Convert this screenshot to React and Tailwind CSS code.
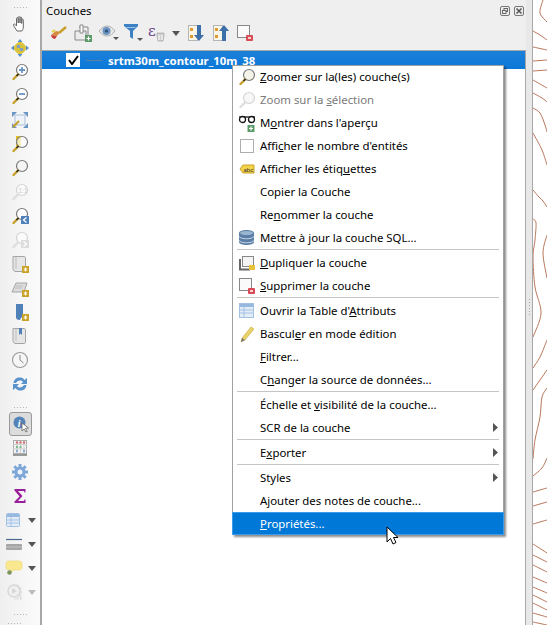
import React from 'react';

const Svg = ({ children, w = 18, h = 18, className = '' }) => (
  <svg width={w} height={h} viewBox={`0 0 ${w} ${h}`} className={`block shrink-0 overflow-visible ${className}`}>{children}</svg>
);

const Arrow = ({ fill = '#555' }) => (
  <svg width="8" height="5" viewBox="0 0 8 5" className="block shrink-0"><path d="M0 0h8L4 5z" fill={fill} /></svg>
);

const Lens = ({ fill = '#f3f3ea', muted = false, handle = true }) => (
  <>
    <circle cx="11" cy="7" r="5.5" fill={fill} stroke={muted ? '#d4d4d4' : '#7a7a7a'} strokeWidth="1.2" />
    {handle && <path d="M7 11.5L2.5 16" stroke={muted ? '#dedede' : '#c79f2b'} strokeWidth="2.4" strokeLinecap="round" />}
    {handle && !muted && <path d="M7.5 11L5.5 13" stroke="#222" strokeWidth="1.4" />}
  </>
);

const Hand = () => (
  <Svg><path d="M6 16c-1-2-3-4-3.500-6-.2-1 1-1.500 1.700-.5L5.500 11V3.500c0-1.200 1.700-1.200 1.700 0V8V2.500c0-1.200 1.800-1.200 1.800 0V8V3c0-1.200 1.700-1.200 1.700 0v5.500V5c0-1.100 1.600-1.100 1.600 0v7c0 2-.7 3-1.300 4z" fill="#fff" stroke="#666" strokeWidth="1" /></Svg>
);
const PanTo = () => (
  <Svg>
    <path d="M5 5l4-3 4 3 3 4-3 4-4 3-4-3-3-4z" fill="#d8c23c" />
    <path d="M9 0l2.500 3h-5zM9 18l-2.500-3h5zM0 9l3-2.500v5zM18 9l-3-2.500v5z" fill="#5b8fc9" />
    <path d="M6 6h3v3H6zM9 9h3v3H9z" fill="#7d9ec7" />
  </Svg>
);
const ZoomIn = () => (<Svg><Lens fill="#fff" /><path d="M8 7h6M11 4v6" stroke="#6a94c4" strokeWidth="1.800" /></Svg>);
const ZoomOut = () => (<Svg><Lens fill="#fff" /><path d="M8 7h6" stroke="#6a94c4" strokeWidth="1.800" /></Svg>);
const ZoomFull = () => (
  <Svg>
    <path d="M1 1h5L1 6zM17 1v5l-5-5zM17 17h-5l5-5zM1 17v-5l5 5z" fill="#6a94c4" />
    <rect x="4" y="4" width="10" height="10" fill="#f0f4f8" stroke="#a9c0da" />
    <path d="M8 10L2 16" stroke="#c79f2b" strokeWidth="2.200" />
  </Svg>
);
const ZoomLayer = () => (<Svg><rect x="5" y="1" width="5" height="10" fill="#e0c020" /><Lens fill="#ffffffb0" /></Svg>);
const ZoomSel = () => (<Svg><Lens fill="#f4f4f4" /></Svg>);
const ZoomNative = () => (
  <Svg><Lens muted fill="#fbfbfb" /><text x="7.500" y="9.500" fontSize="6.500" fill="#c8c8c8" fontFamily="Liberation Sans">1:1</text></Svg>
);
const ZoomLast = () => (
  <Svg><Lens fill="#fff" /><rect x="10" y="9" width="8" height="8" fill="#4f80b8" /><path d="M15.500 10.500L12.500 13l3 2.500" stroke="#fff" strokeWidth="1.300" fill="none" /></Svg>
);
const ZoomNext = () => (
  <Svg><Lens muted fill="#fbfbfb" /><rect x="10" y="9" width="8" height="8" fill="#dcdcdc" /><path d="M12.500 10.500L15.500 13l-3 2.500" stroke="#fff" strokeWidth="1.300" fill="none" /></Svg>
);
const Star = () => (
  <g><rect x="11" y="11" width="7" height="7" fill="#c9a227" /><path d="M14.500 12.500v4M12.800 13.500l3.400 2M16.200 13.500l-3.400 2" stroke="#fff" strokeWidth=".9" /></g>
);
const Scroll = ({ children }) => (
  <Svg>
    <path d="M2 1.500h11c1 0 1.500.5 1.500 1.500v12c0 1-.5 1.500-1.500 1.500H5c-2 0-3-1-3-3z" fill="#e6e6e6" stroke="#a5a5a5" />
    <path d="M5 2v12" stroke="#bdbdbd" />
    {children}
  </Svg>
);
const NewMap = () => (<Scroll><Star /></Scroll>);
const NewComposer = () => (
  <Svg>
    <path d="M5 4h11l-3 9H1z" fill="#dcdcdc" stroke="#a5a5a5" />
    <path d="M5 7h7M4 9h7" stroke="#bdbdbd" />
    <Star />
  </Svg>
);
const NewBookmark = () => (
  <Svg><path d="M5 1h7v13c-2 0-2 1-3 3-3 0-4-1-4-3z" fill="#4f80b8" /><Star /></Svg>
);
const Bookmarks = () => (<Scroll><path d="M8 1h3v7L9.500 6.500 8 8z" fill="#4f80b8" /></Scroll>);
const Clock = () => (
  <Svg><circle cx="9" cy="9" r="7.500" fill="#f6f6f6" stroke="#9a9a9a" strokeWidth="1.100" /><path d="M9 4v5l3.500 3" stroke="#888" strokeWidth="1" fill="none" /></Svg>
);
const Refresh = () => (
  <Svg>
    <path d="M2.500 8C3 4 6 2 9.500 2.500c2 .2 3.300 1.300 4 2.500L16 3v6h-6l2-2C10.500 4.800 6.500 5 5 8z" fill="#5a92cc" />
    <path d="M15.500 10c-.5 4-3.500 6-7 5.500-2-.2-3.300-1.300-4-2.500L2 15V9h6l-2 2c1.500 2.200 5.500 2 7-1z" fill="#5a92cc" />
  </Svg>
);
const Identify = () => (
  <Svg>
    <circle cx="7.500" cy="7.500" r="6" fill="#5583b8" />
    <text x="5.800" y="11.500" fontSize="10" fontStyle="italic" fontWeight="700" fill="#fff" fontFamily="Liberation Serif">i</text>
    <path d="M10 8l6.500 5-3 .3 1.700 3-1.300.7-1.700-3-2.200 2z" fill="#fff" stroke="#666" strokeWidth=".8" />
  </Svg>
);
const Abacus = () => (
  <Svg>
    <rect x="2.500" y="1.500" width="13" height="13" fill="#f6f6f6" stroke="#aaa" />
    <path d="M2 15h14v2H2z" fill="#999" />
    <path d="M6 2v12M9.500 2v12M13 2v12M2 5.500h14M2 10h14" stroke="#cfcfcf" />
    <circle cx="6" cy="3.500" r="1.200" fill="#d07070" /><circle cx="13" cy="3.500" r="1.200" fill="#d07070" /><circle cx="9.500" cy="3.500" r="1.200" fill="#d07070" />
    <circle cx="6" cy="8" r="1.200" fill="#7dba8a" /><circle cx="9.500" cy="8" r="1.200" fill="#7dba8a" />
    <circle cx="6" cy="12" r="1.200" fill="#86a9d2" /><circle cx="13" cy="12" r="1.200" fill="#86a9d2" />
  </Svg>
);
const Gear = () => (
  <Svg>
    <path d="M9 1v16M1 9h16M3.300 3.300l11.400 11.400M14.700 3.300L3.300 14.700" stroke="#7ea6d8" strokeWidth="3" />
    <circle cx="9" cy="9" r="5.500" fill="#7ea6d8" />
    <circle cx="9" cy="9" r="2.500" fill="#eef3f9" />
  </Svg>
);
const Sigma = () => (
  <Svg><path d="M3.500 2h11v3.500h-1L13 4H7l4.500 5L7 14h6l.5-1.500h1V16h-11v-1.500L8.500 9.500 3.500 3.500z" fill="#9a1f9a" /></Svg>
);
const TableIcon = () => (
  <Svg w={14} h={14}>
    <rect x=".5" y=".5" width="13" height="13" rx="1" fill="#e3edf8" stroke="#a3c1e3" />
    <rect x="1" y="1" width="12" height="3" fill="#97b9e0" />
    <path d="M1 7h12M1 10h12M5 4v9" stroke="#a3c1e3" />
  </Svg>
);
const Measure = () => (
  <Svg w={16} h={11}>
    <path d="M0 .5h16" stroke="#4a688e" strokeWidth="1.200" />
    <rect y="5" width="16" height="6" rx="1" fill="#a5a5a5" />
    <path d="M0 8h16" stroke="#c5c5c5" />
  </Svg>
);
const Tip = () => (
  <Svg w={16} h={15}>
    <path d="M3 0h10c2 0 3 1 3 3v3c0 2-1 3-3 3H8l-3 2V9H3C1 9 0 8 0 6V3C0 1 1 0 3 0z" fill="#f9e88f" stroke="#ecd672" strokeWidth=".6" />
    <circle cx="3.500" cy="11.500" r="2.300" fill="#7d9360" />
  </Svg>
);
const Disabled = () => (
  <Svg>
    <path d="M8 1l1.500 1.500L12 2l1 2 2 1-.5 2.500L16 9l-1.500 1.500.5 2.500-2 1-1 2-2.500-.5L8 17" fill="#f0f0f0" stroke="#dcdcdc" />
    <circle cx="8" cy="8" r="6" fill="#f0f0f0" stroke="#d8d8d8" strokeWidth="1.500" />
    <path d="M6 5l5 3-5 3z" fill="#d8d8d8" />
    <path d="M12 12l4 3-2 .3 1 2" stroke="#d8d8d8" fill="#fff" />
  </Svg>
);

const Brush = () => (
  <Svg>
    <path d="M17 3L10 9" stroke="#c79f2b" strokeWidth="2.500" />
    <path d="M11 8l-3 4-6-1c2-1 3-3 5-4z" fill="#d78a3a" />
    <path d="M2 11l6 1-2 3c-2 0-4-2-4-4z" fill="#c94040" />
    <path d="M3 8l3-2" stroke="#e0d040" strokeWidth="2" />
  </Svg>
);
const AddGroup = () => (
  <Svg>
    <path d="M1 7h11v9H1z" fill="#ececec" stroke="#888" />
    <path d="M5 3h9v10" fill="none" stroke="#888" />
    <path d="M6 1h3v8H6z" fill="#fff" stroke="#888" />
    <rect x="11" y="11" width="7" height="7" fill="#5c9a6a" />
    <path d="M14.500 12.500v4M12.500 14.500h4" stroke="#fff" strokeWidth="1.200" />
  </Svg>
);
const Eye = () => (
  <span className="relative block h-[18px] w-[18px]">
    <Svg w={16} h={12} className="absolute left-0 top-[1px]">
      <path d="M0 6c3-3 5-5 8-5 3 0 6 2 8 5-2 3-5 5-8 5-3 0-6-2-8-5z" fill="#e6e6e6" stroke="#b0b0b0" />
      <circle cx="7.500" cy="6" r="4" fill="#6b95c0" />
      <circle cx="7.500" cy="6" r="1.600" fill="#2c5078" />
    </Svg>
    <span className="absolute bottom-[2px] right-[-2px] h-0 w-0 border-x-[3px] border-t-[3px] border-x-transparent border-t-[#555]" />
  </span>
);
const Funnel = () => (
  <span className="relative block h-[18px] w-[18px]">
    <Svg w={14} h={15} className="absolute left-0 top-0">
      <path d="M0 0h14v2L9 7v8l-3-2V7L0 2z" fill="#3d80c4" />
      <path d="M2 3h10l-1 1H3z" fill="#9cc3e6" />
    </Svg>
    <span className="absolute bottom-[1px] right-[-1px] h-0 w-0 border-x-[3px] border-t-[3px] border-x-transparent border-t-[#555]" />
  </span>
);
const Epsilon = () => (
  <Svg>
    <text x="0" y="12" fontSize="15" fill="#6a3f86" fontFamily="DejaVu Serif">ε</text>
    <path d="M9 9h7v3l-1 5h-5l-1-5z" fill="#cfcfcf" stroke="#9a9a9a" strokeWidth=".6" />
    <path d="M11 11v5M14 11v5" stroke="#fff" />
  </Svg>
);
const Expand = ({ up }) => (
  <Svg>
    <rect x="1.500" y="1.500" width="9" height="15" fill="#fbf7e8" stroke="#b5b5b5" />
    <rect x="3" y="4" width="3" height="3" fill="#e09a30" /><rect x="3" y="11" width="3" height="3" fill="#e09a30" />
    <path d={up ? 'M12 1l5 6h-3v10h-4V7H7z' : 'M10 1h4v10h3l-5 6-5-6h3z'} fill="#3d6fa8" />
  </Svg>
);
const RemoveLayer = () => (
  <Svg>
    <rect x="1.500" y="1.500" width="12" height="12" fill="#fafafa" stroke="#888" />
    <rect x="10" y="11" width="7" height="6" rx="1" fill="#d94b55" />
    <path d="M12 14h3" stroke="#fff" strokeWidth="1.500" />
  </Svg>
);

const Glasses = () => (
  <Svg>
    <path d="M1 3h16" stroke="#111" strokeWidth="1.300" />
    <circle cx="4.500" cy="5.500" r="3" fill="#fff" stroke="#111" strokeWidth="1.300" />
    <circle cx="13.500" cy="5.500" r="3" fill="#fff" stroke="#111" strokeWidth="1.300" />
    <rect x="9.500" y="11" width="7" height="7" fill="#5c9a6a" />
    <path d="M13 12.500v4M11 14.500h4" stroke="#fff" strokeWidth="1.200" />
  </Svg>
);
const CheckOff = () => (<span className="block h-[14px] w-[14px] border border-[#adadad] bg-white" />);
const LabelTag = () => (
  <Svg h={10} w={14}>
    <path d="M0 5l3-4h11v8H3z" fill="#f4d24a" stroke="#c9a227" />
    <text x="3.500" y="7.500" fontSize="6" fill="#333" fontFamily="Liberation Sans">abc</text>
  </Svg>
);
const Database = () => (
  <Svg w={15} h={15}>
    <path d="M0 3c0-4 15-4 15 0v9c0 4-15 4-15 0z" fill="#5b7fa6" />
    <ellipse cx="7.500" cy="3" rx="6.500" ry="2" fill="#9ab5d0" />
    <path d="M0 6.500c2 3 13 3 15 0M0 10.500c2 3 13 3 15 0" stroke="#c5d3e2" fill="none" />
  </Svg>
);
const Duplicate = () => (
  <Svg>
    <path d="M2 5v10.500h10" fill="none" stroke="#666" strokeWidth="2" />
    <rect x="4.500" y="2.500" width="11" height="10" fill="#f4f4f4" stroke="#888" />
    <rect x="11" y="11" width="6" height="5" fill="#e8c33a" />
  </Svg>
);
const Pencil = () => (
  <Svg>
    <path d="M13 2l3 2-9 11-4 2 1-4z" fill="#e9d26a" stroke="#c2a63c" strokeWidth=".6" />
    <path d="M3 17l1-4 3 2z" fill="#777" />
  </Svg>
);
const MenuTable = () => (
  <Svg w={15} h={15}>
    <rect x=".5" y=".5" width="14" height="14" fill="#e3edf8" stroke="#a3c1e3" />
    <rect x="1" y="1" width="13" height="3" fill="#97b9e0" />
    <path d="M1 7h13M1 10h13M5 4v10" stroke="#a3c1e3" />
  </Svg>
);

const SIDE_TOOLS = [Hand, PanTo, ZoomIn, ZoomOut, ZoomFull, ZoomLayer, ZoomSel, ZoomNative, ZoomLast, ZoomNext, NewMap, NewComposer, NewBookmark, Bookmarks, Clock, Refresh];
const SIDE_TOOLS_2 = [Abacus, Gear, Sigma];
const SIDE_DROPS = [TableIcon, Measure, Tip, Disabled];

const Grip = ({ className = '' }) => (
  <div className={`h-[3px] w-[16px] bg-[radial-gradient(#b5b5b5_40%,transparent_45%)] bg-[length:3px_3px] ${className}`} />
);

function SideBar() {
  return (
    <div className="flex w-[42px] shrink-0 flex-col items-start border-r-2 border-[#a8a8a8] bg-gradient-to-r from-[#efefef] to-[#fbfbfb]">
      <Grip className="mt-[6px] ml-[13px]" />
      <div className="h-[3px]" />
      {SIDE_TOOLS.map((Tool, i) => (
        <div key={i} className="flex h-6 w-[40px] items-center justify-center"><Tool /></div>
      ))}
      <Grip className="mt-[10px] ml-[13px]" />
      <div className="mt-[3px] ml-[9px] flex h-6 w-[23px] items-center justify-center rounded-[3px] border border-[#999] bg-[#dcdcdc]"><Identify /></div>
      {SIDE_TOOLS_2.map((Tool, i) => (
        <div key={i} className="flex h-6 w-[40px] items-center justify-center"><Tool /></div>
      ))}
      {SIDE_DROPS.map((Tool, i) => (
        <div key={i} className="flex h-6 w-[40px] items-center pl-[6px]">
          <span className="flex w-[22px] justify-start"><Tool /></span>
          <Arrow fill={i === 3 ? '#bdbdbd' : '#555'} />
        </div>
      ))}
      <Grip className="mt-[9px] ml-[13px]" />
      <Grip className="mt-[6px] ml-[7px]" />
    </div>
  );
}

function TopBar() {
  const items = [
    ['w-[24px]', <Brush />],
    ['w-[25px]', <AddGroup />],
    ['w-[26px]', <Eye />],
    ['w-[24px]', <Funnel />],
    ['w-[24px]', <Epsilon />],
    ['w-[14px]', <Arrow />],
    ['w-[26px]', <Expand />],
    ['w-[24px]', <Expand up />],
    ['w-[24px]', <RemoveLayer />],
  ];
  return (
    <div className="flex h-[26px] items-center pl-[4px]">
      {items.map(([w, icon], i) => (
        <span key={i} className={`flex ${w} items-center justify-center`}>{icon}</span>
      ))}
    </div>
  );
}

function DockButtons() {
  return (
    <div className="flex gap-[4px]">
      <svg width="10" height="10" viewBox="0 0 10 10" className="block">
        <rect x=".5" y=".5" width="9" height="9" rx="1.500" fill="#eee" stroke="#777" />
        <rect x="4" y="2.500" width="3.500" height="3" fill="none" stroke="#666" />
        <rect x="2.500" y="4.500" width="3.500" height="3" fill="#eee" stroke="#666" />
      </svg>
      <svg width="10" height="10" viewBox="0 0 10 10" className="block">
        <rect x=".5" y=".5" width="9" height="9" rx="1.500" fill="#eee" stroke="#777" />
        <path d="M2.500 2.500l5 5M7.500 2.500l-5 5" stroke="#555" strokeWidth="1.500" />
      </svg>
    </div>
  );
}

const MENU = [
  { icon: <Svg><Lens /></Svg>, pre: '', key: 'Z', post: 'oomer sur la(les) couche(s)' },
  { icon: <Svg><Lens muted fill="#f7f7f7" /></Svg>, pre: 'Zoom sur la ', key: 's', post: 'élection', off: true },
  { icon: <Glasses />, pre: 'M', key: 'o', post: 'ntrer dans l\'aperçu' },
  { icon: <CheckOff />, pre: 'Affi', key: 'c', post: 'her le nombre d\'entités' },
  { icon: <LabelTag />, pre: 'Afficher les étiq', key: 'u', post: 'ettes' },
  { pre: 'Copier la Couche' },
  { pre: 'Re', key: 'n', post: 'ommer la couche' },
  { icon: <Database />, pre: 'Mettre à jour la couche SQL...' },
  'sep',
  { icon: <Duplicate />, pre: '', key: 'D', post: 'upliquer la couche' },
  { icon: <RemoveLayer />, pre: '', key: 'S', post: 'upprimer la couche' },
  'sep',
  { icon: <MenuTable />, pre: 'Ouvrir la Table d\'', key: 'A', post: 'ttributs' },
  { icon: <Pencil />, pre: 'Bascul', key: 'e', post: 'r en mode édition' },
  { pre: '', key: 'F', post: 'iltrer...' },
  { pre: 'C', key: 'h', post: 'anger la source de données...' },
  'sep',
  { pre: 'Échelle et ', key: 'v', post: 'isibilité de la couche...' },
  { pre: 'SCR de la couche', sub: true },
  'sep',
  { pre: 'E', key: 'x', post: 'porter', sub: true },
  'sep',
  { pre: 'Styles', sub: true },
  { pre: 'Ajouter des notes de couche...' },
  { pre: '', key: 'P', post: 'ropriétés...', active: true },
];

function MenuRow({ item }) {
  const tone = item.active
    ? 'bg-[#0078d7] text-white outline outline-1 -outline-offset-1 outline-[#3a9bea]'
    : item.off ? 'text-[#7a7a7a]' : 'text-black';
  return (
    <div className={`relative flex h-[23px] items-center ${tone}`}>
      <span className="flex w-[28px] shrink-0 items-center justify-center pl-[1px]">{item.icon}</span>
      <span className="whitespace-pre">{item.pre}{item.key && <u>{item.key}</u>}{item.post}</span>
      {item.sub && (
        <svg width="5" height="9" viewBox="0 0 5 9" className="absolute right-[6px] top-[7px]"><path d="M0 0l5 4.500L0 9z" fill="#555" /></svg>
      )}
    </div>
  );
}

function ContextMenu() {
  return (
    <div className="absolute left-[232px] top-[65px] w-[272px] border border-[#a0a0a0] bg-white text-[11.4px] shadow-[2px_2px_2px_rgba(0,0,0,0.45)]">
      <div className="-m-px">
        {MENU.map((item, i) => (
          item === 'sep'
            ? <div key={i} className="mx-[5px] h-[2px] border-t border-[#c4c4c4]" />
            : <MenuRow key={i} item={item} />
        ))}
      </div>
    </div>
  );
}

const CONTOURS = [
  [[543, 0], [540, 13], [547, 22]], [[533, 31], [540, 35], [547, 40]], [[533, 47], [547, 50]], [[533, 61], [547, 60]], [[533, 71], [547, 70]],
  [[533, 80], [547, 88]], [[533, 93], [542, 98], [547, 102]], [[533, 108], [540, 113], [545, 125], [547, 132]], [[533, 133], [542, 150], [547, 165]],
  [[533, 190], [539, 197], [543, 201], [547, 207]], [[533, 219], [536, 223], [535, 240], [533, 257], [535, 287], [541, 313], [533, 337]],
  [[547, 235], [543, 253], [547, 278]], [[547, 340], [540, 357], [533, 368]], [[547, 370], [533, 390]],
  [[547, 388], [542, 397], [540, 417], [535, 440], [533, 459]], [[547, 458], [542, 468], [533, 476]], [[533, 492], [547, 488]], [[533, 506], [547, 502]],
  [[533, 524], [547, 520]], [[533, 544], [547, 553]], [[533, 555], [547, 562]], [[533, 565], [547, 572]], [[533, 577], [547, 583]], [[533, 587], [547, 593]],
  [[533, 595], [547, 602]], [[533, 603], [547, 610]], [[533, 613], [547, 617]], [[533, 622], [547, 625]],
];

// catmull-rom through the points, so the contours bend instead of kinking
const toPath = (pts) => {
  let d = `M${pts[0][0]} ${pts[0][1]}`;
  for (let i = 0; i < pts.length - 1; i++) {
    const p0 = pts[i - 1] || pts[i];
    const p1 = pts[i];
    const p2 = pts[i + 1];
    const p3 = pts[i + 2] || p2;
    const c1 = [p1[0] + (p2[0] - p0[0]) / 6, p1[1] + (p2[1] - p0[1]) / 6];
    const c2 = [p2[0] - (p3[0] - p1[0]) / 6, p2[1] - (p3[1] - p1[1]) / 6];
    d += `C${c1[0]} ${c1[1]} ${c2[0]} ${c2[1]} ${p2[0]} ${p2[1]}`;
  }
  return d;
};

function MapCanvas() {
  return (
    <div className="min-w-0 flex-1 bg-white">
      <svg width="14" height="625" viewBox="533 0 14 625" className="block">
        {CONTOURS.map((pts, i) => (
          <path key={i} d={toPath(pts)} fill="none" stroke="#b8775a" strokeWidth="1" />
        ))}
      </svg>
    </div>
  );
}

export default function App() {
  return (
    <div className="relative flex h-[625px] w-[547px] overflow-hidden bg-[#efefef] font-['Noto_Sans',sans-serif] text-[11.4px]">
      <SideBar />
      <div className="flex w-[484px] shrink-0 flex-col">
        <div className="flex h-[20px] items-center justify-between pt-[2px] pr-[2px] pl-[4px] text-black">
          <span>Couches</span>
          <DockButtons />
        </div>
        <TopBar />
        <div className="mt-[4px] flex-1 border-t border-r border-[#a8a8a8] bg-white">
          <div className="flex h-[18px] items-center bg-gradient-to-b from-[#1b80d9] to-[#0a78d8]">
            <span className="ml-[24px] flex h-[14px] w-[14px] items-center justify-center bg-white">
              <svg width="11" height="10" viewBox="0 0 11 10"><path d="M1 5l3 4 6-8" fill="none" stroke="#000" strokeWidth="2" /></svg>
            </span>
            <span className="ml-[6px] h-px w-[16px] bg-[#5c7fa0]" />
            <span className="ml-[6px] pt-[1px] font-bold text-white">srtm30m_contour_10m_38</span>
          </div>
        </div>
      </div>
      <div className="flex w-[7px] shrink-0 items-center justify-center border-r border-[#a8a8a8] bg-[#e8e8e8]">
        <span className="mt-[-12px] h-[16px] w-[1px] bg-[repeating-linear-gradient(#aaa_0_1px,transparent_1px_3px)]" />
      </div>
      <MapCanvas />
      <ContextMenu />
      <svg width="14" height="20" viewBox="0 0 14 20" className="absolute left-[386px] top-[526px]">
        <path d="M1 1v15l3.500-3.500L7 18l3-1.500-2.500-5H12z" fill="#fff" stroke="#000" strokeWidth="1" />
      </svg>
    </div>
  );
}
